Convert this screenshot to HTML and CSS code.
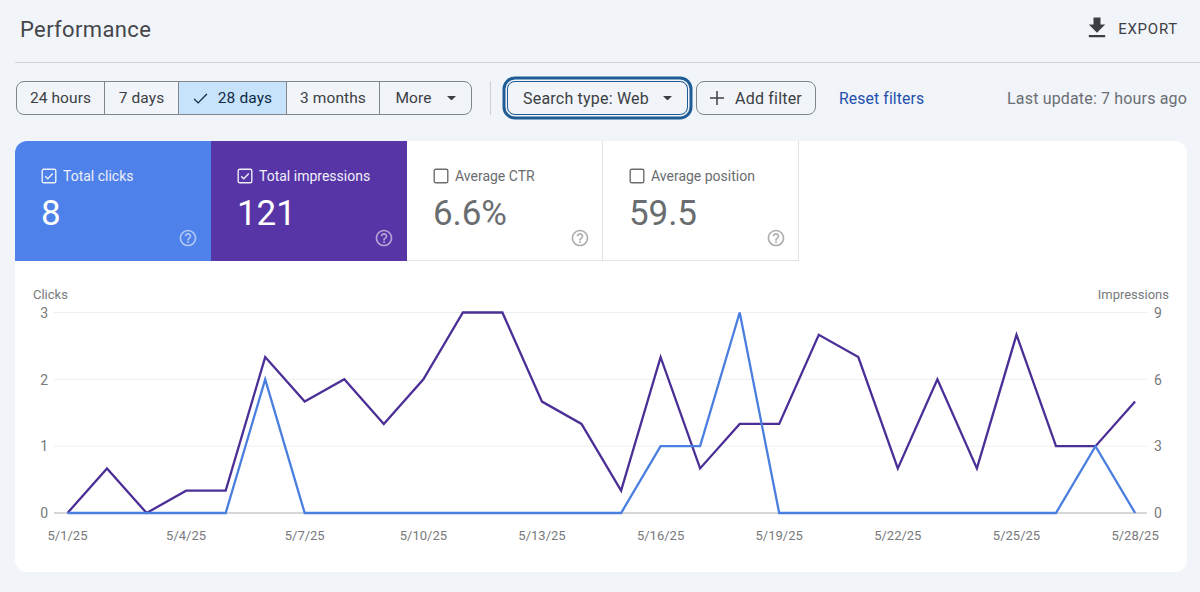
FILE: index.html
```html
<!DOCTYPE html>
<html lang="en">
<head>
<meta charset="utf-8">
<title>Performance</title>
<link rel="stylesheet" href="styles.css">
</head>
<body>
<svg class="sprite" aria-hidden="true">
  <symbol id="help" viewBox="0 0 24 24"><path d="M11 18h2v-2h-2v2zm1-16C6.48 2 2 6.48 2 12s4.48 10 10 10 10-4.48 10-10S17.52 2 12 2zm0 18c-4.41 0-8-3.59-8-8s3.59-8 8-8 8 3.59 8 8-3.59 8-8 8zm0-14c-2.21 0-4 1.79-4 4h2c0-1.1.9-2 2-2s2 .9 2 2c0 2-3 1.75-3 5h2c0-2.25 3-2.5 3-5 0-2.21-1.79-4-4-4z"/></symbol>
  <symbol id="checked" viewBox="0 0 16 16"><rect x="1.2" y="1.2" width="13.6" height="13.6" rx="1.6" fill="none" stroke="currentColor" stroke-width="1.4"/><path d="M4.2 8.2l2.6 2.6 5-5.2" fill="none" stroke="currentColor" stroke-width="1.4"/></symbol>
  <symbol id="unchecked" viewBox="0 0 16 16"><rect x="1.2" y="1.2" width="13.6" height="13.6" rx="1.6" fill="none" stroke="currentColor" stroke-width="1.4"/></symbol>
  <symbol id="caret" viewBox="0 0 10 5"><path d="M0 0h10L5 5z"/></symbol>
</svg>
<header class="page-head">
  <h1 class="title">Performance</h1>
  <button class="export">
    <svg class="export-icon" viewBox="0 0 24 24"><path d="M19 9h-4V3H9v6H5l7 7 7-7zM5 18v2h14v-2H5z"/></svg>
    EXPORT
  </button>
</header>
<div class="toolbar">
  <div class="segments">
    <span class="seg seg-24">24 hours</span>
    <span class="seg seg-7">7 days</span>
    <span class="seg seg-28 is-active">
      <svg class="tick" viewBox="0 0 16 12"><path d="M1 6.4l4.4 4.4L15 1.2" fill="none" stroke="currentColor" stroke-width="1.5"/></svg>
      28 days
    </span>
    <span class="seg seg-3">3 months</span>
    <span class="seg seg-more">More <svg class="caret"><use href="#caret"/></svg></span>
  </div>
  <span class="divider"></span>
  <button class="chip chip-search">Search type: Web <svg class="caret"><use href="#caret"/></svg></button>
  <button class="chip chip-add">
    <svg class="plus" viewBox="0 0 14 14"><path d="M7 0v14M0 7h14" fill="none" stroke="currentColor" stroke-width="1.5"/></svg>
    Add filter
  </button>
  <a class="reset">Reset filters</a>
  <span class="updated">Last update: 7 hours ago</span>
</div>
<section class="card">
  <div class="tiles">
    <div class="tile tile-clicks">
      <div class="tile-label"><svg class="box"><use href="#checked"/></svg>Total clicks</div>
      <div class="tile-value">8</div>
      <svg class="help"><use href="#help"/></svg>
    </div>
    <div class="tile tile-impr">
      <div class="tile-label"><svg class="box"><use href="#checked"/></svg>Total impressions</div>
      <div class="tile-value">121</div>
      <svg class="help"><use href="#help"/></svg>
    </div>
    <div class="tile tile-off">
      <div class="tile-label"><svg class="box"><use href="#unchecked"/></svg>Average CTR</div>
      <div class="tile-value">6.6%</div>
      <svg class="help"><use href="#help"/></svg>
    </div>
    <div class="tile tile-off">
      <div class="tile-label"><svg class="box"><use href="#unchecked"/></svg>Average position</div>
      <div class="tile-value">59.5</div>
      <svg class="help"><use href="#help"/></svg>
    </div>
  </div>
  <svg class="chart" viewBox="15 261 1172 311" width="1172" height="311">
    <g class="grid">
      <line x1="54" x2="1147" y1="312.5" y2="312.5"/>
      <line x1="54" x2="1147" y1="379.3" y2="379.3"/>
      <line x1="54" x2="1147" y1="446.2" y2="446.2"/>
    </g>
    <line class="baseline" x1="54" x2="1147" y1="513" y2="513"/>
    <g class="labels">
      <text x="33" y="298.5">Clicks</text>
      <text class="end" x="1169" y="298.5">Impressions</text>
      <g class="ticks">
        <text class="end" x="48" y="317.5">3</text>
        <text class="end" x="48" y="384.5">2</text>
        <text class="end" x="48" y="451">1</text>
        <text class="end" x="48" y="518">0</text>
        <text x="1154" y="317.5">9</text>
        <text x="1154" y="384.5">6</text>
        <text x="1154" y="451">3</text>
        <text x="1154" y="518">0</text>
      </g>
    </g>
    <g class="dates">
      <text x="67.5" y="540">5/1/25</text>
      <text x="186.1" y="540">5/4/25</text>
      <text x="304.7" y="540">5/7/25</text>
      <text x="423.4" y="540">5/10/25</text>
      <text x="542" y="540">5/13/25</text>
      <text x="660.6" y="540">5/16/25</text>
      <text x="779.2" y="540">5/19/25</text>
      <text x="897.8" y="540">5/22/25</text>
      <text x="1016.5" y="540">5/25/25</text>
      <text x="1135.1" y="540">5/28/25</text>
    </g>
    <polyline class="line line-impr" points="67.5,513 107,468.4 146.6,513 186.1,490.7 225.7,490.7 265.2,357.1 304.7,401.6 344.3,379.3 383.8,423.9 423.4,379.3 462.9,312.5 502.4,312.5 542,401.6 581.5,423.9 621.1,490.7 660.6,357.1 700.1,468.4 739.7,423.9 779.2,423.9 818.8,334.8 858.3,357.1 897.8,468.4 937.4,379.3 976.9,468.4 1016.5,334.8 1056,446.2 1095.5,446.2 1135.1,401.6"/>
    <polyline class="line line-clicks" points="67.5,513 225.7,513 265.2,379.3 304.7,513 621.1,513 660.6,446.2 700.1,446.2 739.7,312.5 779.2,513 1056,513 1095.5,446.2 1135.1,513"/>
  </svg>
</section>
</body>
</html>
```
FILE: styles.css
```css
* { box-sizing: border-box; }
html, body { margin: 0; height: 592px; overflow: hidden; }
body {
  background: #f1f4f9;
  font-family: Roboto, "Liberation Sans", sans-serif;
  color: #3c4043;
}
.sprite { display: none; }

.page-head {
  display: flex;
  align-items: center;
  justify-content: space-between;
  height: 63px;
  margin-left: 15px;
  padding: 0 22px 4px 5px;
  border-bottom: 1px solid #cdd1d6;
}
.title {
  margin: 0;
  font-size: 22px;
  font-weight: 400;
  letter-spacing: 0.36px;
  color: #444649;
}
.export {
  display: flex;
  align-items: center;
  gap: 7px;
  padding: 0;
  border: 0;
  background: none;
  font: 400 15px Roboto, sans-serif;
  letter-spacing: 0.75px;
  color: #3f4245;
}
.export-icon { width: 28px; height: 28px; fill: #3c3f42; margin-top: -3px; }

.toolbar {
  display: flex;
  align-items: center;
  height: 34px;
  margin: 18px 13px 0 16px;
  font-size: 15.5px;
}
.segments {
  display: flex;
  height: 34px;
  width: 456px;
  border: 1px solid #80868b;
  border-radius: 8px;
  overflow: hidden;
}
.seg {
  display: flex;
  align-items: center;
  justify-content: center;
  gap: 10px;
  border-right: 1px solid #80868b;
  color: #3c4043;
  letter-spacing: 0.1px;
}
.seg:last-child { border-right: 0; }
.seg-24 { width: 88px; }
.seg-7 { width: 74px; }
.seg-28 { width: 108px; }
.seg-3 { width: 93px; }
.seg-more { flex: 1; gap: 15px; padding-right: 0; }
.is-active { background: #c6e3fb; color: #0f2a44; }
.tick { width: 15px; height: 11px; }
.caret { width: 9px; height: 4.5px; fill: #3c4043; }
.divider { width: 1px; height: 34px; margin: 0 16px 0 18px; background: #cdd1d6; }
.chip {
  display: flex;
  align-items: center;
  height: 34px;
  border: 1px solid #80868b;
  border-radius: 8px;
  background: none;
  font: 400 16px Roboto, sans-serif;
  letter-spacing: 0.2px;
  color: #3c4043;
}
.chip-search {
  width: 181px;
  justify-content: center;
  gap: 14px;
  margin-right: 8px;
  border-color: #1f5c96;
  box-shadow: 0 0 0 1.5px #f1f4f9, 0 0 0 4.5px #1f5c96;
}
.chip-add { width: 120px; justify-content: center; gap: 11px; padding-right: 6px; }
.plus { width: 14px; height: 14px; }
.reset { margin-left: 23px; font-size: 15.8px; color: #2350ad; letter-spacing: 0.1px; }
.updated { margin-left: auto; color: #6b6f73; font-size: 16px; letter-spacing: 0.16px; }

.card {
  width: 1172px;
  height: 431px;
  margin: 26px 0 0 15px;
  border-radius: 12px;
  background: #fff;
  overflow: hidden;
}
.tiles { display: flex; height: 120px; }
.tile {
  position: relative;
  width: 196px;
  padding: 27px 0 0 26px;
}
.tile-clicks { background: #4f81ea; color: #fff; }
.tile-impr { background: #5835a6; color: #fff; }
.tile-off {
  color: #6a6d70;
  border-right: 1px solid #e1e3e6;
  border-bottom: 1px solid #e1e3e6;
}
.tile-label {
  display: flex;
  align-items: center;
  gap: 6px;
  height: 16px;
  font-size: 14px;
}
.tile-clicks .tile-label, .tile-impr .tile-label { color: #eef0fa; }
.box { width: 16px; height: 16px; }
.tile-value {
  margin-top: 9px;
  font-size: 35px;
  line-height: 42px;
  letter-spacing: -0.1px;
}
.help {
  position: absolute;
  right: 13px;
  bottom: 13px;
  width: 20px;
  height: 20px;
  fill: currentColor;
  opacity: 0.55;
}
.tile-off .help { right: 12px; bottom: 12px; }

.chart { display: block; }
.grid line { stroke: #eeeff1; stroke-width: 1; }
.baseline { stroke: #aeb0b2; stroke-width: 1.2; }
.labels text, .dates text { font-size: 13px; fill: #77797c; }
.labels .ticks text { font-size: 14px; }
.labels .end { text-anchor: end; }
.dates text { text-anchor: middle; }
.line { fill: none; stroke-width: 2.3; stroke-linejoin: miter; }
.line-impr { stroke: #4b2f96; }
.line-clicks { stroke: #4a7fe0; }
```
